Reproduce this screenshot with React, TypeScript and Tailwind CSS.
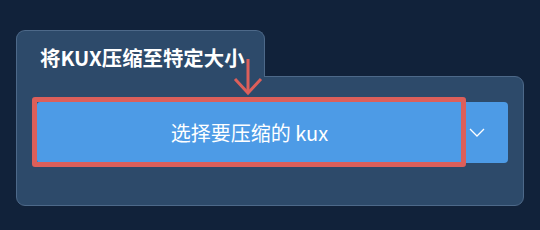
import React from "react";

export default function App() {
  return (
    <div
      className="w-[540px] h-[230px] bg-[#11223a] pt-[30px] pl-[16px] relative overflow-hidden"
      style={{ fontFamily: '"Noto Sans CJK SC", "Noto Sans", sans-serif' }}
    >
      <div className="w-[508px] flex flex-col">
        <div className="relative z-10 -mb-px w-[249px] h-[47px] bg-[#2d4a6a] border border-b-0 border-[#4d6989] rounded-t-[9px] pl-[23px] pt-[13px]">
          <span className="text-white font-bold text-[20.4px] leading-[26px] block whitespace-nowrap">将KUX压缩至特定大小</span>
        </div>
        <div className="h-[130px] bg-[#2d4a6a] border border-[#4d6989] rounded-b-[9px] rounded-tr-[9px] pl-[20px] pr-[15px] pt-[25px]">
          <div className="flex h-[61px]">
            <button className="w-[425px] h-full bg-[#4d9be6] rounded-l-[3px] text-white text-[20px] leading-none flex items-center justify-center">
              选择要压缩的 kux
            </button>
            <div className="flex-1 h-full bg-[#4d9be6] rounded-r-[4px] flex items-center pl-[7px]">
              <svg width="16" height="9" viewBox="0 0 16 9" fill="none">
                <polyline points="1,1 8,8 15,1" stroke="white" strokeWidth="1.3" />
              </svg>
            </div>
          </div>
        </div>
      </div>
      <div className="absolute z-20 left-[32px] top-[97px] w-[434px] h-[70px] border-[5px] border-[#dc5f5a] rounded-[3px] pointer-events-none" />
      <svg className="absolute z-20 left-[232px] top-[58px]" width="32" height="38" viewBox="0 0 32 38" fill="none">
        <line x1="16" y1="1" x2="16" y2="34" stroke="#dc5f5a" strokeWidth="3" />
        <polyline points="3,21 16,35 29,21" stroke="#dc5f5a" strokeWidth="3" strokeLinejoin="miter" />
      </svg>
    </div>
  );
}
